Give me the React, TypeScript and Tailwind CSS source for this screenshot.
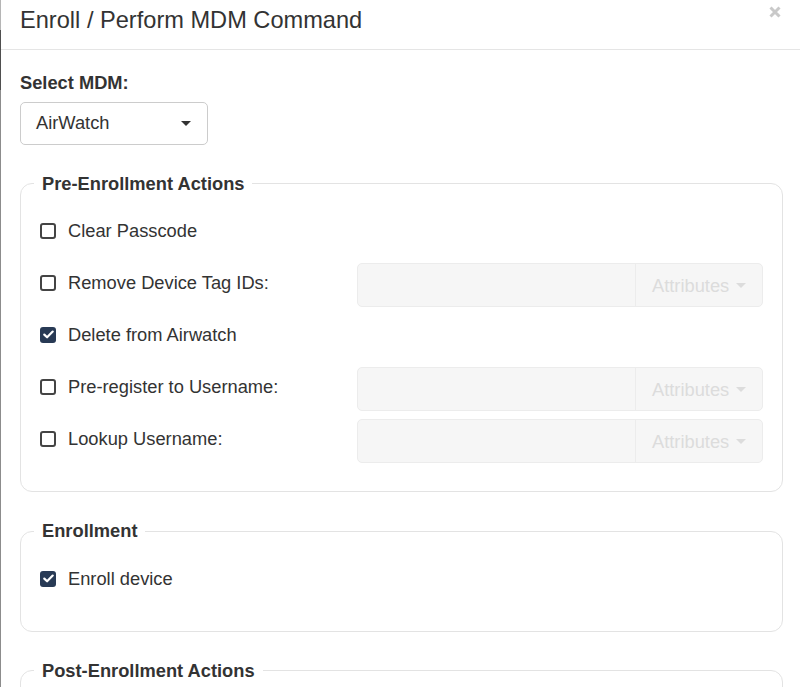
import React from "react";

type Row = { label: string; checked?: boolean; input?: boolean };

const preRows: Row[] = [
  { label: "Clear Passcode" },
  { label: "Remove Device Tag IDs:", input: true },
  { label: "Delete from Airwatch", checked: true },
  { label: "Pre-register to Username:", input: true },
  { label: "Lookup Username:", input: true },
];

function Checkbox({ checked }: { checked?: boolean }) {
  if (checked) {
    return (
      <span className="flex h-[16px] w-[16px] shrink-0 items-center justify-center rounded-[3px] bg-[#283a55]">
        <svg width="11" height="9" viewBox="0 0 11 9" fill="none" aria-hidden="true">
          <path d="M1.3 4.6 4.1 7.3 9.7 1.6" stroke="white" strokeWidth="2.2" strokeLinecap="round" strokeLinejoin="round" />
        </svg>
      </span>
    );
  }
  return <span className="h-[16px] w-[16px] shrink-0 rounded-[3px] border-2 border-[#444]" />;
}

function AttrInput() {
  return (
    <div className="flex h-[44px] flex-1 rounded-[5px] border border-[#ececec] bg-[#f6f6f6]">
      <div className="flex-1" />
      <div className="flex w-[127px] items-center justify-between border-l border-[#ececec] pl-[16px] pr-[16px] text-[#dcdcdc]">
        <span>Attributes</span>
        <span className="border-x-[5px] border-t-[5px] border-x-transparent border-t-[#dcdcdc]" />
      </div>
    </div>
  );
}

function CheckRow({ row }: { row: Row }) {
  return (
    <div className="flex h-[44px] items-center">
      <label className="mb-[5px] flex w-[317px] items-center gap-[12px]">
        <Checkbox checked={row.checked} />
        <span>{row.label}</span>
      </label>
      {row.input && <AttrInput />}
    </div>
  );
}

function Group({ title, children }: { title: string; children?: React.ReactNode }) {
  return (
    <fieldset className="mt-[26px] rounded-[12px] border border-[#e3e3e3] px-[19px] pb-[28px] pt-[15px]">
      <legend className="-ml-[6px] px-[8px] font-bold">{title}</legend>
      <div className="flex flex-col gap-[8px]">{children}</div>
    </fieldset>
  );
}

export default function App() {
  return (
    <div className="flex h-[687px] overflow-hidden bg-white font-['Liberation_Sans',Arial,sans-serif] text-[18.3px] leading-[25.7px] text-[#333]">
      {/* backdrop edge */}
      <div className="flex w-px shrink-0 flex-col bg-[#8c8c8c]">
        <div className="h-[30px] bg-[#b5b5b5]" />
        <div className="h-[60px] bg-[#4f4f4f]" />
      </div>

      <div className="flex-1">
        <div className="flex h-[50px] items-start justify-between border-b border-[#e5e5e5] pl-[19px] pr-[19px]">
          <h4 className="pt-[8px] text-[23.6px] leading-[1.1]">Enroll / Perform MDM Command</h4>
          <button aria-label="Close" className="pt-[6px]">
            <svg width="12" height="12" viewBox="0 0 12 12" aria-hidden="true">
              <path d="M1.5 1.5 10.5 10.5M10.5 1.5 1.5 10.5" stroke="#c9c9c9" strokeWidth="3" />
            </svg>
          </button>
        </div>

        <div className="pl-[19px] pr-[17px] pt-[20px]">
          <div className="mb-[6px] font-bold">Select MDM:</div>
          <div className="flex h-[43px] w-[188px] items-center justify-between rounded-[5px] border border-[#ccc] pl-[15px] pr-[16px]">
            <span>AirWatch</span>
            <span className="border-x-[5px] border-t-[5px] border-x-transparent border-t-[#333]" />
          </div>

          <Group title="Pre-Enrollment Actions">
            {preRows.map((r) => (
              <CheckRow key={r.label} row={r} />
            ))}
          </Group>

          <Group title="Enrollment">
            <CheckRow row={{ label: "Enroll device", checked: true }} />
          </Group>

          <Group title="Post-Enrollment Actions">
            <div className="h-[44px]" />
          </Group>
        </div>
      </div>
    </div>
  );
}
